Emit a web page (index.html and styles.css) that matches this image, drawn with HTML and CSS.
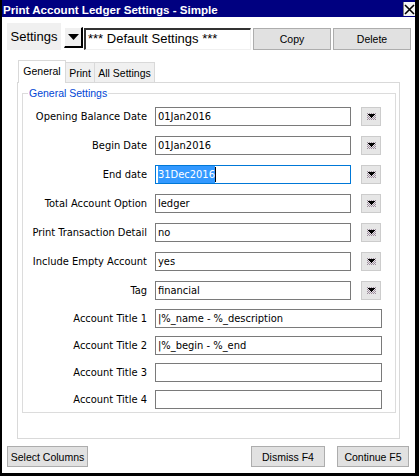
FILE: index.html
```html
<!DOCTYPE html>
<html>
<head>
<meta charset="utf-8">
<link rel="stylesheet" href="styles.css">
</head>
<body>
<svg class="defs" width="0" height="0"><defs><pattern id="dith" width="2" height="2" patternUnits="userSpaceOnUse"><rect width="2" height="2" fill="#e8e0e8"/><rect width="1" height="1" fill="#9a909a"/><rect x="1" y="1" width="1" height="1" fill="#9a909a"/></pattern></defs></svg>
<div class="window">
  <div class="titlebar">
    <span class="title">Print Account Ledger Settings - Simple</span>
    <span class="close"><svg width="11" height="11" viewBox="0 0 11 11"><path d="M1 1L10 10M10 1L1 10" stroke="#000" stroke-width="1.6"/></svg></span>
  </div>
  <div class="content">
    <div class="settings-row">
      <div class="settings-label">Settings</div>
      <div class="combo-btn"><svg width="11" height="6" viewBox="0 0 11 6"><path d="M0 0H11L5.5 6Z" fill="#000"/></svg></div>
      <div class="settings-input">*** Default Settings ***</div>
      <div class="btn btn-top">Copy</div>
      <div class="btn btn-top">Delete</div>
    </div>
    <div class="tabs">
      <div class="tab active">General</div>
      <div class="tab">Print</div>
      <div class="tab">All Settings</div>
    </div>
    <div class="panel">
      <fieldset class="group">
        <legend>General Settings</legend>
        <div class="grid grid-dd">
          <div class="lbl">Opening Balance Date</div><div class="field">01Jan2016</div><div class="dd"><svg width="11" height="9" viewBox="0 0 11 9" shape-rendering="crispEdges"><rect x="1" y="1" width="9" height="7" fill="url(#dith)"/><path d="M2 2H9V3H8V4H7V5H6V6H5V5H4V4H3V3H2Z" fill="#000"/></svg></div>
          <div class="lbl">Begin Date</div><div class="field">01Jan2016</div><div class="dd"><svg width="11" height="9" viewBox="0 0 11 9" shape-rendering="crispEdges"><rect x="1" y="1" width="9" height="7" fill="url(#dith)"/><path d="M2 2H9V3H8V4H7V5H6V6H5V5H4V4H3V3H2Z" fill="#000"/></svg></div>
          <div class="lbl">End date</div><div class="field focus"><span class="sel">31Dec2016</span><span class="caret"></span></div><div class="dd"><svg width="11" height="9" viewBox="0 0 11 9" shape-rendering="crispEdges"><rect x="1" y="1" width="9" height="7" fill="url(#dith)"/><path d="M2 2H9V3H8V4H7V5H6V6H5V5H4V4H3V3H2Z" fill="#000"/></svg></div>
          <div class="lbl">Total Account Option</div><div class="field">ledger</div><div class="dd"><svg width="11" height="9" viewBox="0 0 11 9" shape-rendering="crispEdges"><rect x="1" y="1" width="9" height="7" fill="url(#dith)"/><path d="M2 2H9V3H8V4H7V5H6V6H5V5H4V4H3V3H2Z" fill="#000"/></svg></div>
          <div class="lbl">Print Transaction Detail</div><div class="field">no</div><div class="dd"><svg width="11" height="9" viewBox="0 0 11 9" shape-rendering="crispEdges"><rect x="1" y="1" width="9" height="7" fill="url(#dith)"/><path d="M2 2H9V3H8V4H7V5H6V6H5V5H4V4H3V3H2Z" fill="#000"/></svg></div>
          <div class="lbl">Include Empty Account</div><div class="field">yes</div><div class="dd"><svg width="11" height="9" viewBox="0 0 11 9" shape-rendering="crispEdges"><rect x="1" y="1" width="9" height="7" fill="url(#dith)"/><path d="M2 2H9V3H8V4H7V5H6V6H5V5H4V4H3V3H2Z" fill="#000"/></svg></div>
          <div class="lbl">Tag</div><div class="field">financial</div><div class="dd"><svg width="11" height="9" viewBox="0 0 11 9" shape-rendering="crispEdges"><rect x="1" y="1" width="9" height="7" fill="url(#dith)"/><path d="M2 2H9V3H8V4H7V5H6V6H5V5H4V4H3V3H2Z" fill="#000"/></svg></div>
        </div>
        <div class="grid grid-title">
          <div class="lbl">Account Title 1</div><div class="field wide">|%_name - %_description</div>
          <div class="lbl">Account Title 2</div><div class="field wide">|%_begin - %_end</div>
          <div class="lbl">Account Title 3</div><div class="field wide"></div>
          <div class="lbl">Account Title 4</div><div class="field wide"></div>
        </div>
      </fieldset>
    </div>
    <div class="footer">
      <div class="btn btn-select">Select Columns</div>
      <div class="footer-right">
        <div class="btn btn-dismiss">Dismiss F4</div>
        <div class="btn btn-continue">Continue F5</div>
      </div>
    </div>
  </div>
</div>
</body>
</html>
```
FILE: styles.css
```css
* { box-sizing: border-box; }
html, body { margin: 0; padding: 0; background: #000; }
body { width: 419px; height: 476px; overflow: hidden; }
.defs { position: absolute; width: 0; height: 0; }

.window {
  width: 419px;
  height: 476px;
  padding: 0 4px 3px 2px;
  display: flex;
  flex-direction: column;
  background: #000;
}

.titlebar {
  height: 17px;
  flex: none;
  background: #000080;
  display: flex;
  align-items: center;
  justify-content: space-between;
}
.title {
  color: #fff;
  font: bold 11.6px "Liberation Sans", Arial, sans-serif;
  padding-left: 1px;
  padding-top: 1px;
}
.close {
  width: 12px;
  height: 14px;
  margin-top: 1px;
  background: #f4f4f4;
  border-left: 1px solid #808080;
  display: flex;
  align-items: center;
  justify-content: center;
}

.content {
  flex: 1;
  background: #fff;
  display: flex;
  flex-direction: column;
}

.settings-row {
  display: flex;
  align-items: flex-end;
  margin-top: 6px;
  padding-left: 5px;
  height: 27px;
  flex: none;
}
.settings-label {
  width: 54px;
  height: 27px;
  background: #f0f0f0;
  font: 13px "Liberation Sans", Arial, sans-serif;
  display: flex;
  align-items: center;
  justify-content: center;
  color: #000;
}
.combo-btn {
  margin-left: 3px;
  margin-bottom: 2px;
  width: 19px;
  height: 21px;
  background: #f0f0f0;
  border-style: solid;
  border-width: 1px 2px 2px 1px;
  border-color: #fff #000 #000 #fff;
  display: flex;
  align-items: center;
  justify-content: center;
}
.settings-input {
  margin-left: 1px;
  width: 167px;
  height: 22px;
  border-style: solid;
  border-width: 2px 1px 1px 2px;
  border-color: #333 #f0f0f0 #f0f0f0 #333;
  font: 13px "Liberation Sans", Arial, sans-serif;
  padding-left: 2px;
  line-height: 17px;
  white-space: nowrap;
  overflow: hidden;
}

.btn {
  height: 21px;
  background: #e1e1e1;
  border: 1px solid #adadad;
  font: 10.5px "Liberation Sans", Arial, sans-serif;
  color: #000;
  display: flex;
  align-items: center;
  justify-content: center;
  white-space: nowrap;
}
.btn-top { margin-left: 2px; width: 78px; height: 22px; }

.tabs {
  display: flex;
  align-items: flex-end;
  margin: 10px 15px 0 16px;
  height: 22px;
  flex: none;
}
.tab {
  height: 20px;
  background: #f0f0f0;
  border: 1px solid #d9d9d9;
  border-bottom: none;
  font: 10.5px "Liberation Sans", Arial, sans-serif;
  color: #000;
  display: flex;
  align-items: center;
  justify-content: center;
  padding-top: 1px;
}
.tab:nth-child(2) { width: 29px; border-left: none; }
.tab:nth-child(3) { width: 60px; border-left: none; }
.tab.active {
  width: 48px;
  height: 23px;
  margin-bottom: -1px;
  background: #fff;
  position: relative;
  z-index: 1;
  padding-top: 0;
  padding-bottom: 3px;
}

.panel {
  margin: 0 15px 0 15px;
  height: 357px;
  flex: none;
  border: 1px solid #d9d9d9;
  background: #fff;
  padding: 4px 3px 0 4px;
}

.group {
  margin: 0;
  padding: 0;
  height: 326px;
  border: 1px solid #dcdcdc;
  min-width: 0;
}
.group legend {
  margin-left: 5px;
  padding: 0 1px;
  font: 10.5px "Liberation Sans", Arial, sans-serif;
  color: #0046d5;
  line-height: 13px;
}

.grid {
  display: grid;
  grid-template-columns: 132px 206px 20px;
}
.grid-dd { row-gap: 10px; grid-auto-rows: 19px; margin-top: 7px; }
.grid-title { row-gap: 8px; grid-auto-rows: 19px; margin-top: 9px; }

.lbl {
  font-family: "DejaVu Sans Condensed", "DejaVu Sans", sans-serif;
  font-stretch: condensed;
  font-size: 11px;
  color: #000;
  text-align: right;
  padding-right: 8px;
  line-height: 19px;
  white-space: nowrap;
}
.field {
  width: 196px;
  height: 19px;
  border: 1px solid #7a7a7a;
  font-family: "DejaVu Sans Condensed", "DejaVu Sans", sans-serif;
  font-stretch: condensed;
  font-size: 11px;
  color: #000;
  padding-left: 2px;
  line-height: 17px;
  white-space: nowrap;
  overflow: hidden;
  display: flex;
  align-items: center;
}
.field.wide { width: 227px; grid-column: 2 / 4; }
.field.focus { border-color: #0078d7; }
.sel { background: #3399ff; color: #fff; }
.caret { width: 1px; height: 15px; background: #000; }

.dd {
  width: 20px;
  height: 19px;
  background: #e6e6e6;
  border: 1px solid #cccccc;
  display: flex;
  align-items: center;
  justify-content: center;
}

.footer {
  display: flex;
  justify-content: space-between;
  margin-top: 7px;
  padding: 0 6px 0 5px;
  flex: none;
}
.footer-right { display: flex; gap: 12px; }
.btn-select { width: 81px; }
.btn-dismiss { width: 74px; }
.btn-continue { width: 72px; }
```
